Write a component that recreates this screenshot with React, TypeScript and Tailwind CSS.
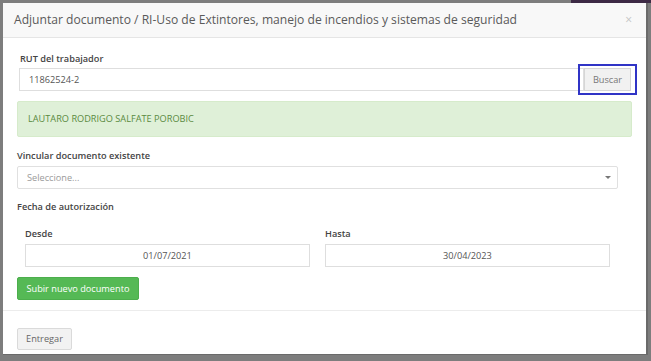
import React from 'react';

const App: React.FC = () => {
  return (
    <div className="relative w-[651px] h-[361px] overflow-hidden bg-[#7d7d7d] font-['Open_Sans',sans-serif]">
      {/* page behind the overlay */}
      <div className="flex h-[3px]">
        <div className="flex-1" />
        <div className="w-[80px] bg-[#3d2a45]" />
      </div>

      <div className="ml-[3px] w-[645px] h-[352px] bg-white border-r-2 border-b border-[#6a6a6a] flex flex-col">
        {/* header */}
        <div className="h-[35px] shrink-0 bg-[#f8f8f8] border-b border-[#e5e5e5] flex items-center justify-between pl-[11px] pr-[14px]">
          <h4 className="text-[12.1px] text-[#5a5a5a] whitespace-nowrap">
            Adjuntar documento / RI-Uso de Extintores, manejo de incendios y sistemas de seguridad
          </h4>
          <span className="text-[12px] text-[#c4c4c4] leading-none">×</span>
        </div>

        {/* body */}
        <div className="flex flex-col px-[14px] pb-[10px] text-[9.2px]">
          <div className="mt-[12px] ml-[2px] mr-[1px]">
            <label className="block h-[17px] leading-[17px] ml-[1px] font-semibold text-[#444]">RUT del trabajador</label>
            <div className="mt-[1px] flex">
              <div className="flex-1 h-[23px] border border-[#dedede] flex items-center px-[9px] text-[#555]">11862524-2</div>
              <div className="relative">
                <button className="h-[23px] w-[47px] border border-[#d6d6d6] bg-[#f1f1f1] text-[#777] text-[9.2px]">Buscar</button>
                <span className="absolute -left-[6px] -right-[6px] -top-[4px] -bottom-[4px] border-2 border-[#3034c6]" />
              </div>
            </div>
          </div>

          <div className="mt-[10px] h-[36px] rounded-[2px] bg-[#dff0d8] border border-[#d6ebcb] flex items-center px-[10px] text-[#5a8a3f]">
            LAUTARO RODRIGO SALFATE POROBIC
          </div>

          <label className="mt-[10px] h-[17px] leading-[17px] font-semibold text-[#444]">Vincular documento existente</label>
          <div className="mt-[2px] mr-[14px] h-[23px] border border-[#e0e0e0] rounded-[2px] flex items-center justify-between pl-[9px] pr-[6px] text-[#9a9a9a]">
            <span>Seleccione...</span>
            <svg width="6" height="3" viewBox="0 0 6 3"><path d="M0 0h6L3 3z" fill="#777" /></svg>
          </div>

          <label className="mt-[9px] h-[17px] leading-[17px] font-semibold text-[#444]">Fecha de autorización</label>

          <div className="mt-[10px] ml-[8px] flex gap-[15px]">
            <div className="w-[285px]">
              <label className="block h-[17px] leading-[17px] font-semibold text-[#444]">Desde</label>
              <div className="mt-[2px] h-[23px] border border-[#dedede] flex items-center justify-center text-[#555]">01/07/2021</div>
            </div>
            <div className="w-[285px]">
              <label className="block h-[17px] leading-[17px] font-semibold text-[#444]">Hasta</label>
              <div className="mt-[2px] h-[23px] border border-[#dedede] flex items-center justify-center text-[#555]">30/04/2023</div>
            </div>
          </div>

          <div className="mt-[10px]">
            <button className="h-[23px] w-[122px] rounded-[2px] bg-[#55b955] border border-[#4cae4c] text-white text-[9.2px]">Subir nuevo documento</button>
          </div>
        </div>

        {/* footer */}
        <div className="border-t border-[#ececec] px-[14px] pt-[13px]">
          <button className="h-[22px] w-[55px] rounded-[2px] bg-[#f2f2f2] border border-[#dadada] text-[#666] text-[9.2px]">Entregar</button>
        </div>
      </div>
    </div>
  );
};

export default App;
